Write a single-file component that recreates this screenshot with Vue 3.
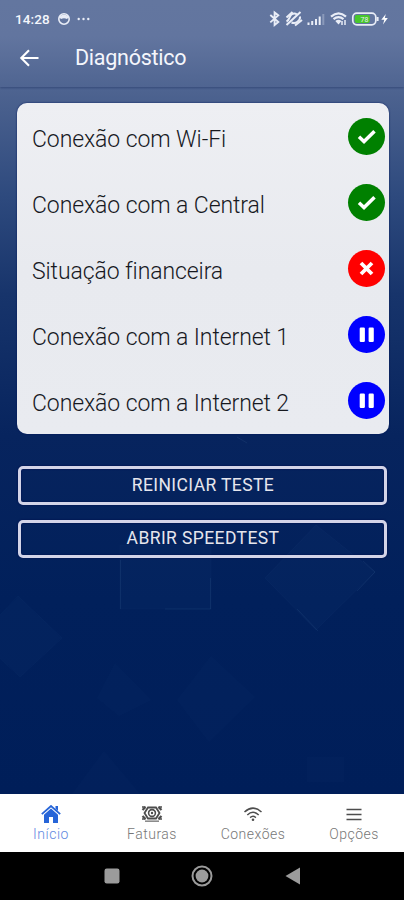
<script setup>
import { ref } from 'vue'

const tests = ref([
  { name: 'Conexão com Wi-Fi', status: 'ok' },
  { name: 'Conexão com a Central', status: 'ok' },
  { name: 'Situação financeira', status: 'error' },
  { name: 'Conexão com a Internet 1', status: 'paused' },
  { name: 'Conexão com a Internet 2', status: 'paused' }
])

const tabs = [
  { id: 'home', label: 'Início' },
  { id: 'bills', label: 'Faturas' },
  { id: 'wifi', label: 'Conexões' },
  { id: 'menu', label: 'Opções' }
]

const activeTab = ref('home')
</script>

<template>
  <div class="screen">
    <svg class="shapes" width="404" height="707" viewBox="0 87 404 707">
      <g fill="#4379a5" fill-opacity="0.045" stroke="#8bafd5" stroke-opacity="0.03">
        <path d="M120 545H211V609H120z" />
        <path d="M316 525L375 572L316 630L265 578z" />
        <path d="M18 596L62 638L20 677L-22 638z" />
      </g>
      <g fill="#2f5c9c" fill-opacity="0.04">
        <path d="M211 656L255 697L209 742L177 700z" />
        <path d="M115 663L151 700L119 716L97 698z" />
        <path d="M104 751L140 794H72z" />
        <path d="M307 757H344V782H307z" />
      </g>
      <path d="M120.5 560V609M210.5 578V609H165M297 609L318 631M357 591L375 572L363 561M237 437L247 443" fill="none" stroke="#6f9bc5" stroke-opacity="0.1" />
    </svg>

    <header class="header">
      <div class="status-bar">
        <div class="status-left">
          <span class="time">14:28</span>
          <svg width="14" height="14" viewBox="0 0 14 14">
            <circle cx="7" cy="7" r="5.2" fill="none" stroke="#e9edf7" stroke-width="1.6" />
            <path d="M2 5Q7 0 12 5L10 7Q7 5.5 4 7z" fill="#e9edf7" />
          </svg>
          <svg class="dots" width="13" height="4" viewBox="0 0 13 4" fill="#e9edf7">
            <circle cx="1.7" cy="2" r="1.2" />
            <circle cx="6.5" cy="2" r="1.2" />
            <circle cx="11.3" cy="2" r="1.2" />
          </svg>
        </div>
        <svg width="122" height="18" viewBox="268 10 122 18" fill="none" stroke="#e9edf7">
          <path d="M270.3 15L278.3 22L274.6 25V12.4L278.3 15.4L270.3 22.4" stroke-width="1.9" />
          <path d="M286.5 21.5C290 20 289 16 292 14.2Q294.5 12.6 297 14.5M300 16.5Q300.5 19.5 297.5 21.8Q294.5 24 291.5 22.5" stroke-width="2" />
          <path d="M286.5 17.5L292.5 12M295 25.5L302 20M286.5 25L300.5 12" stroke-width="2" />
          <path d="M308.5 22.5V25M312.2 21V25M316 19V25M319.7 16.5V25" stroke-width="2" />
          <path d="M323.3 14V25" stroke-width="2" stroke-opacity="0.3" />
          <path d="M331 16.6Q338.5 10 346 16.6M333.5 19.2Q338.5 15 343.5 19.2" stroke-width="2.2" />
          <path d="M335.3 21Q338.5 18.4 341.5 21L338.5 24.5z" fill="#e9edf7" stroke="none" />
          <path d="M342 21V25M345 20V25" stroke-width="1.5" />
          <rect x="352.8" y="13.2" width="23" height="11.6" rx="4" stroke-width="1.7" />
          <path d="M377.6 17V21" stroke-width="2" />
          <rect x="354.8" y="15.1" width="15" height="7.8" rx="1.8" fill="#48c82c" stroke="none" />
          <text x="364.5" y="21.8" class="battery-text">78</text>
          <path d="M385.8 14L381.3 19.7H384.3L383 24.5L387.8 18H384.8z" fill="#fff" stroke="none" />
        </svg>
      </div>
      <div class="toolbar">
        <button class="back-button" aria-label="Voltar">
          <svg width="20" height="20" viewBox="0 0 20 20" fill="none" stroke="#fff" stroke-width="2.1">
            <path d="M19.5 10H2.5M10 2.3L2.3 10L10 17.7" />
          </svg>
        </button>
        <h1>Diagnóstico</h1>
      </div>
    </header>

    <main class="content">
      <ul class="card">
        <li v-for="test in tests" :key="test.name" class="test-row">
          <span>{{ test.name }}</span>
          <div class="status-icon" :class="test.status">
            <svg width="37" height="37" viewBox="0 0 37 37" fill="none" stroke="#fff">
              <path v-if="test.status === 'ok'" d="M11 18.8L16 23.5L26.5 13.2" stroke-width="3.5" />
              <path v-else-if="test.status === 'error'" d="M13 13L24 24M24 13L13 24" stroke-width="3.8" />
              <g v-else fill="#fff" stroke="none">
                <rect x="11.7" y="11.5" width="5.2" height="14.4" rx="1.2" />
                <rect x="20.6" y="11.5" width="5.2" height="14.4" rx="1.2" />
              </g>
            </svg>
          </div>
        </li>
      </ul>

      <div class="actions">
        <button class="action-button">REINICIAR TESTE</button>
        <button class="action-button">ABRIR SPEEDTEST</button>
      </div>
    </main>

    <nav class="tab-bar">
      <button
        v-for="tab in tabs"
        :key="tab.id"
        class="tab"
        :class="{ active: activeTab === tab.id }"
        @click="activeTab = tab.id"
      >
        <svg width="22" height="18" viewBox="0 0 22 18">
          <g v-if="tab.id === 'home'" fill="currentColor">
            <path d="M4 9.7L11 3.5L18 9.7V18H13V12H9V18H4z" />
            <path d="M1.8 9.2L11 1L20.2 9.2" fill="none" stroke="currentColor" stroke-width="1.8" />
            <path d="M15.5 1H18V6L15.5 3.8z" />
          </g>
          <g v-else-if="tab.id === 'bills'" fill="none" stroke="currentColor">
            <path d="M7 2.5H15L18.5 8L15 13.5H7L3.5 8z" stroke-width="1.8" />
            <circle cx="11" cy="8" r="3.4" stroke-width="1.6" />
            <circle cx="11" cy="8" r="1.2" fill="currentColor" stroke="none" />
            <path d="M1.5 5L4.5 2M17.5 2L20.5 5M1.5 11L4.5 14M20.5 11L17.5 14" stroke-width="2.2" />
            <path d="M1 2H4.5M17.5 2H21M1 14H4.5M17.5 14H21" stroke-width="1.4" />
            <path d="M4 16.2H18" stroke-width="1.6" stroke-opacity="0.65" />
          </g>
          <g v-else-if="tab.id === 'wifi'" fill="none" stroke="currentColor" stroke-width="1.5">
            <path d="M2.5 7Q11 -0.8 19.5 7M5.3 10Q11 4.6 16.7 10M8.1 12.6Q11 10 13.9 12.6" />
            <circle cx="11" cy="14.8" r="1.3" fill="currentColor" stroke="none" />
          </g>
          <path v-else d="M3.5 4.5H18.5M3.5 9.5H18.5M3.5 14.5H18.5" stroke="currentColor" stroke-width="1.7" />
        </svg>
        <span>{{ tab.label }}</span>
      </button>
    </nav>

    <footer class="system-nav">
      <svg width="16" height="16" viewBox="0 0 16 16">
        <rect x="0.5" y="0.5" width="15" height="15" rx="2.2" fill="#9b9b9b" />
      </svg>
      <svg width="22" height="22" viewBox="0 0 22 22">
        <circle cx="11" cy="11" r="9.5" fill="none" stroke="#9b9b9b" stroke-width="2" />
        <circle cx="11" cy="11" r="6.4" fill="#9b9b9b" />
      </svg>
      <svg width="16" height="18" viewBox="0 0 16 18">
        <path d="M15 0.5V17.5L0.5 9z" fill="#9b9b9b" />
      </svg>
    </footer>
  </div>
</template>

<style>
body {
  margin: 0;
}
</style>

<style scoped>
.screen {
  position: relative;
  height: 900px;
  display: flex;
  flex-direction: column;
  overflow: hidden;
  font-family: Roboto, sans-serif;
  background: linear-gradient(180deg, #63769f 0, #62759f 36px, #4c628f 95px, #2e4a7e 195px, #17346b 295px, #07245e 435px, #01205b 600px, #001e59 794px);
}

button {
  font-family: inherit;
  border: none;
  background: none;
  padding: 0;
}

.shapes {
  position: absolute;
  top: 87px;
  left: 0;
}

.header {
  height: 87px;
  box-sizing: border-box;
  color: #f4f6fc;
  box-shadow: 0 1px 2px rgba(20, 40, 90, 0.45);
}

.status-bar {
  height: 38px;
  padding: 0 14px 0 15px;
  display: flex;
  justify-content: space-between;
  align-items: center;
}

.status-left {
  display: flex;
  align-items: center;
  gap: 7px;
}

.time {
  font-size: 13.5px;
  font-weight: 500;
  letter-spacing: 0.1px;
}

.dots {
  margin-left: -1px;
}

.battery-text {
  font-size: 7px;
  fill: #e9edf7;
  stroke: none;
  text-anchor: middle;
}

.toolbar {
  height: 39px;
  padding-left: 19px;
  display: flex;
  align-items: center;
  gap: 36px;
}

.back-button {
  display: flex;
}

h1 {
  margin: 0;
  font-size: 21.5px;
  font-weight: 400;
  letter-spacing: -0.25px;
}

.content {
  flex: 1;
  position: relative;
  padding: 16px 15px 0 17px;
}

.card {
  list-style: none;
  margin: 0;
  padding: 0;
  height: 331px;
  border-radius: 10px;
  background: linear-gradient(180deg, #eeeff3, #e8eaef 50%, #e9ebf0);
  box-shadow: 0 0 2px #001359;
}

.test-row {
  height: 66.2px;
  padding: 0 4.5px 0 15px;
  display: flex;
  justify-content: space-between;
  align-items: center;
  font-size: 23px;
  font-weight: 300;
  letter-spacing: -0.09px;
  color: #17191f;
}

.test-row > span {
  padding-top: 6px;
}

.status-icon {
  width: 37px;
  height: 37px;
  border-radius: 50%;
}

.status-icon.ok {
  background: #008000;
}

.status-icon.error {
  background: #f00;
}

.status-icon.paused {
  background: #00f;
}

.actions {
  display: flex;
  flex-direction: column;
  gap: 15px;
  padding: 32px 2px 0 1px;
}

.action-button {
  height: 38.5px;
  padding: 0 0 1px 1px;
  border: 3px solid #d3d4e8;
  border-radius: 5px;
  color: #e6e6ed;
  font-size: 17.5px;
  font-weight: 400;
  letter-spacing: 0.4px;
  box-shadow: 0 0 2px #000a4a, inset 0 0 2px #000a4a;
}

.tab-bar {
  height: 58px;
  display: flex;
  background: #fff;
  position: relative;
}

.tab {
  flex: 1;
  display: flex;
  flex-direction: column;
  align-items: center;
  padding-top: 11px;
  gap: 3px;
  color: #4d4d4d;
}

.tab span {
  padding-left: 1px;
  font-size: 14px;
  font-weight: 300;
  line-height: 17px;
  letter-spacing: 0.5px;
  color: #777;
}

.tab.active {
  color: #2765d8;
}

.tab.active span {
  color: #6289df;
}

.system-nav {
  height: 48px;
  background: #000;
  position: relative;
  display: flex;
  justify-content: center;
  align-items: center;
  gap: 71.5px;
}
</style>
